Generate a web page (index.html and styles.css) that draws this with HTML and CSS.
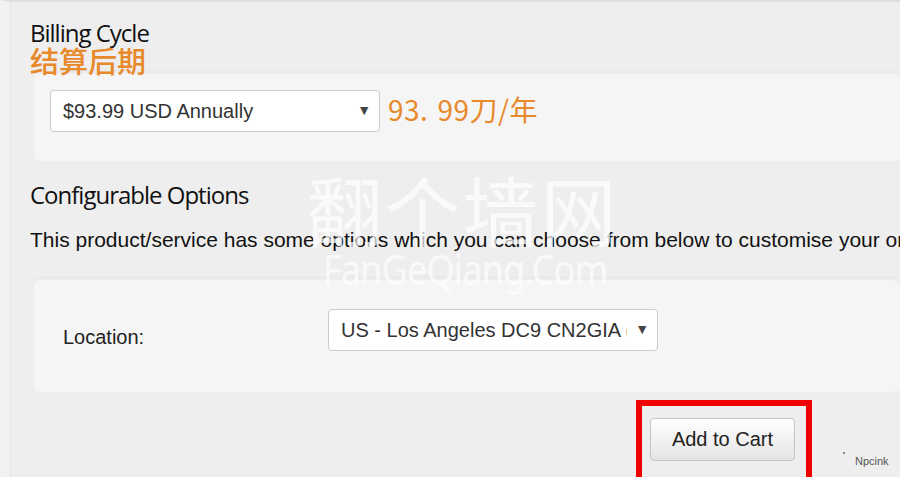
FILE: index.html
```html
<!DOCTYPE html>
<html lang="en">
<head>
    <meta charset="UTF-8">
    <meta name="viewport" content="width=device-width, initial-scale=1.0">
    <title>Configure Product</title>
    <link rel="stylesheet" href="styles.css">
</head>
<body>

<div class="page">
    <h2 class="section-title">Billing Cycle</h2>
    <div class="note-cn">结算后期</div>

    <div class="well well-billing">
        <div class="select-wrap">
            <select class="field-select" name="billingcycle">
                <option>$93.99 USD Annually</option>
            </select>
        </div>
        <span class="price-cn">93<span class="pt">.</span>99刀/年</span>
    </div>

    <h2 class="section-title title-options">Configurable Options</h2>
    <p class="intro">This product/service has some options which you can choose from below to customise your order.</p>

    <div class="well well-options">
        <label class="field-label" for="location">Location:</label>
        <div class="select-wrap">
            <select class="field-select" id="location" name="location">
                <option>US - Los Angeles DC9 CN2GIA (Premium)</option>
            </select>
        </div>
    </div>

    <div class="cart-row">
        <div class="highlight">
            <button type="button" class="btn-cart">Add to Cart</button>
        </div>
    </div>

    <!-- watermark + credit sit over the screenshot -->
    <div class="watermark">
        <div class="wm-cn">翻个墙网</div>
        <div class="wm-en">FanGeQiang.Com</div>
    </div>
    <span class="dot"></span>
    <span class="credit">Npcink</span>
</div>

</body>
</html>
```

FILE: styles.css
```css
html, body {
    margin: 0;
    padding: 0;
    height: 100%;
    overflow: hidden;
}
body {
    background-color: #eeeeee;
    font-family: "Liberation Sans", Arial, sans-serif;
    color: #222;
}
.page {
    position: relative;
    height: 100%;
    box-sizing: border-box;
    border-top: 2px solid #dedede;
    border-left: 10px solid #f1f1f1;
    box-shadow: inset 1px 0 0 #e4e4e4;
    padding: 16px 0 0 20px;
}
.section-title {
    margin: 0;
    font-family: "Open Sans", "Noto Sans", sans-serif;
    font-weight: 400;
    font-size: 24px;
    line-height: 30px;
    letter-spacing: -1px;
    color: #111;
}
.note-cn {
    font-family: "Noto Sans CJK SC", sans-serif;
    font-size: 29px;
    line-height: 25px;
    font-weight: 500;
    color: #e8892b;
}
.well {
    margin-left: 4px;
    background-color: #f5f5f5;
    border-radius: 6px;
    box-shadow: 0 -3px 3px rgba(0, 0, 0, 0.02), inset 0 1px 1px rgba(0, 0, 0, 0.03);
}
.well-billing {
    display: flex;
    align-items: center;
    gap: 8px;
    padding: 17px 16px 29px;
}
.select-wrap {
    position: relative;
}
.select-wrap::after {
    content: "\25BC";
    position: absolute;
    right: 9px;
    top: 12px;
    font-size: 14px;
    color: #444;
    pointer-events: none;
}
.field-select {
    -webkit-appearance: none;
    appearance: none;
    display: block;
    width: 330px;
    height: 42px;
    padding: 0 30px 0 12px;
    border: 1px solid #cccccc;
    border-radius: 4px;
    background-color: #fff;
    font-family: "Liberation Sans", Arial, sans-serif;
    font-size: 20px;
    color: #333;
}
.price-cn {
    font-family: "Noto Sans CJK SC", sans-serif;
    font-size: 28px;
    color: #e8892b;
    letter-spacing: 0.5px;
    margin-top: -4px;
}
.price-cn .pt {
    margin-right: 9px;
}
.title-options {
    margin-top: 19px;
}
.intro {
    margin: 18px 0 0;
    font-size: 21px;
    line-height: 24px;
    white-space: nowrap;
    color: #111;
}
.well-options {
    display: flex;
    align-items: center;
    margin-top: 27px;
    padding: 30px 16px 41px 29px;
}
.field-label {
    width: 265px;
    font-size: 20px;
    color: #222;
    padding-top: 14px;
}
.cart-row {
    padding: 8px 0 0 606px;
}
.highlight {
    display: inline-block;
    border: 6px solid #f00000;
    padding: 12px 11px 20px 8px;
}
.btn-cart {
    width: 145px;
    height: 43px;
    border: 1px solid #c4c4c4;
    border-radius: 4px;
    background: linear-gradient(#ffffff, #e4e4e4);
    font-family: "Liberation Sans", Arial, sans-serif;
    font-size: 20px;
    color: #222;
}
.watermark {
    position: absolute;
    left: 290px;
    top: 164px;
    width: 325px;
    text-align: center;
    color: rgba(255, 255, 255, 0.7);
    pointer-events: none;
}
.wm-cn {
    font-family: "Noto Sans CJK SC", sans-serif;
    font-weight: 400;
    font-size: 76px;
    line-height: 84px;
    letter-spacing: 2px;
}
.wm-en {
    font-family: "Noto Sans", sans-serif;
    font-weight: 400;
    font-size: 42px;
    line-height: 38px;
    letter-spacing: -1px;
    transform: scaleX(0.86);
}
.dot {
    position: absolute;
    left: 833px;
    top: 450px;
    width: 2px;
    height: 2px;
    background: #888;
}
.credit {
    position: absolute;
    left: 845px;
    top: 453px;
    font-size: 11px;
    color: #555;
}
```
